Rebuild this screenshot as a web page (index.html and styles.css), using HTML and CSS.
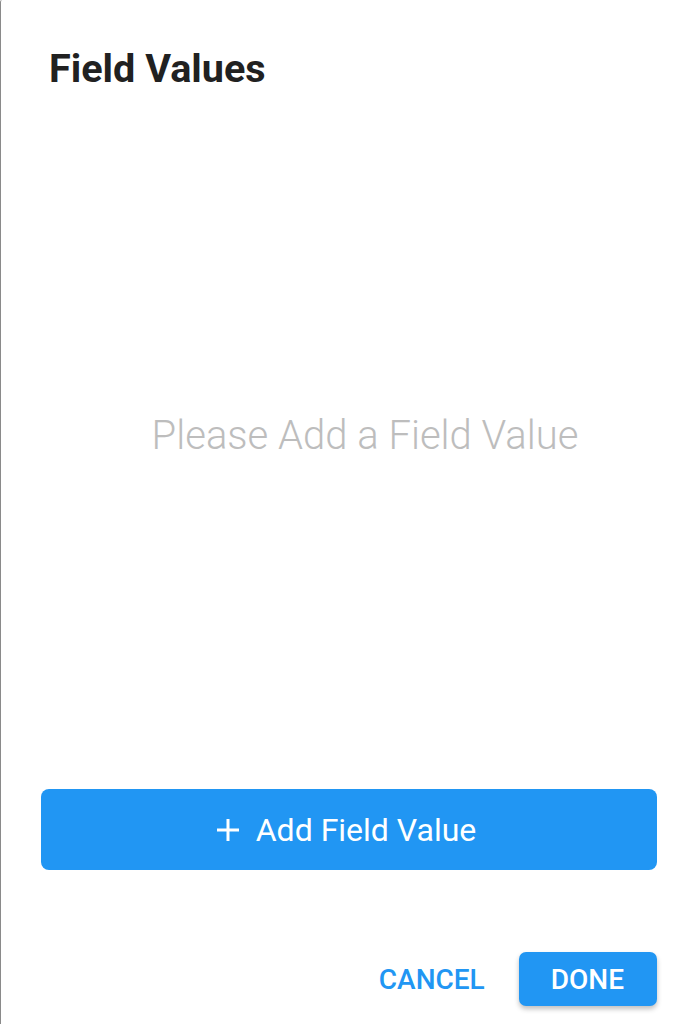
FILE: index.html
```html
<!DOCTYPE html>
<html lang="en">
<head>
<meta charset="utf-8">
<title>Field Values</title>
<link rel="stylesheet" href="styles.css">
</head>
<body>
<div class="dialog">
  <header class="dialog-header">
    <h1 class="dialog-title">Field Values</h1>
  </header>
  <main class="dialog-body">
    <p class="placeholder">Please Add a Field Value</p>
  </main>
  <div class="add-row">
    <button class="add-btn" type="button">
      <svg class="plus" width="22" height="22" viewBox="0 0 22 22" aria-hidden="true">
        <path d="M11 0 V22 M0 11 H22" stroke="#fff" stroke-width="3" fill="none"/>
      </svg>
      <span>Add Field Value</span>
    </button>
  </div>
  <footer class="dialog-footer">
    <button class="text-btn" type="button">CANCEL</button>
    <button class="done-btn" type="button">DONE</button>
  </footer>
</div>
</body>
</html>
```
FILE: styles.css
```css
* { box-sizing: border-box; }
html, body { margin: 0; padding: 0; background: #fff; }
body { font-family: Roboto, "Noto Sans", Arial, sans-serif; }

.dialog {
  height: 1024px;
  border-left: 1px solid #8a8a8a;
  border-top-left-radius: 2px;
  display: flex;
  flex-direction: column;
  background: #fff;
}

.dialog-header { padding: 45px 40px 0 48px; }
.dialog-title {
  margin: 0;
  font-size: 39.6px;
  line-height: 48px;
  font-weight: 700;
  color: #212121;
}

.dialog-body {
  flex: 1;
  display: flex;
  align-items: center;
  justify-content: center;
  padding: 0 0 10px 32px;
}
.placeholder {
  margin: 0;
  font-size: 40px;
  line-height: 46px;
  font-weight: 300;
  color: #bdbdbd;
}

.add-row { padding: 0 40px; }
.add-btn {
  width: 100%;
  height: 81px;
  border: 0;
  border-radius: 8px;
  background: #2196f3;
  color: #fff;
  font-family: inherit;
  font-size: 32px;
  font-weight: 400;
  display: flex;
  align-items: center;
  justify-content: center;
  gap: 17px;
  padding: 0 5px 0 0;
}
.plus { display: block; flex: none; }

.dialog-footer {
  display: flex;
  justify-content: flex-end;
  align-items: center;
  gap: 0;
  padding: 82px 40px 18px;
}
.text-btn, .done-btn {
  height: 54px;
  border: 0;
  font-family: inherit;
  font-size: 28px;
  font-weight: 500;
  padding: 0 33px;
  border-radius: 7px;
}
.text-btn { background: transparent; color: #2196f3; padding: 0 34px 0 32px; }
.done-btn {
  background: #2196f3;
  color: #fff;
  box-shadow: 0 3px 5px rgba(0,0,0,0.25);
  padding: 0 33px 0 32px;
}
```
